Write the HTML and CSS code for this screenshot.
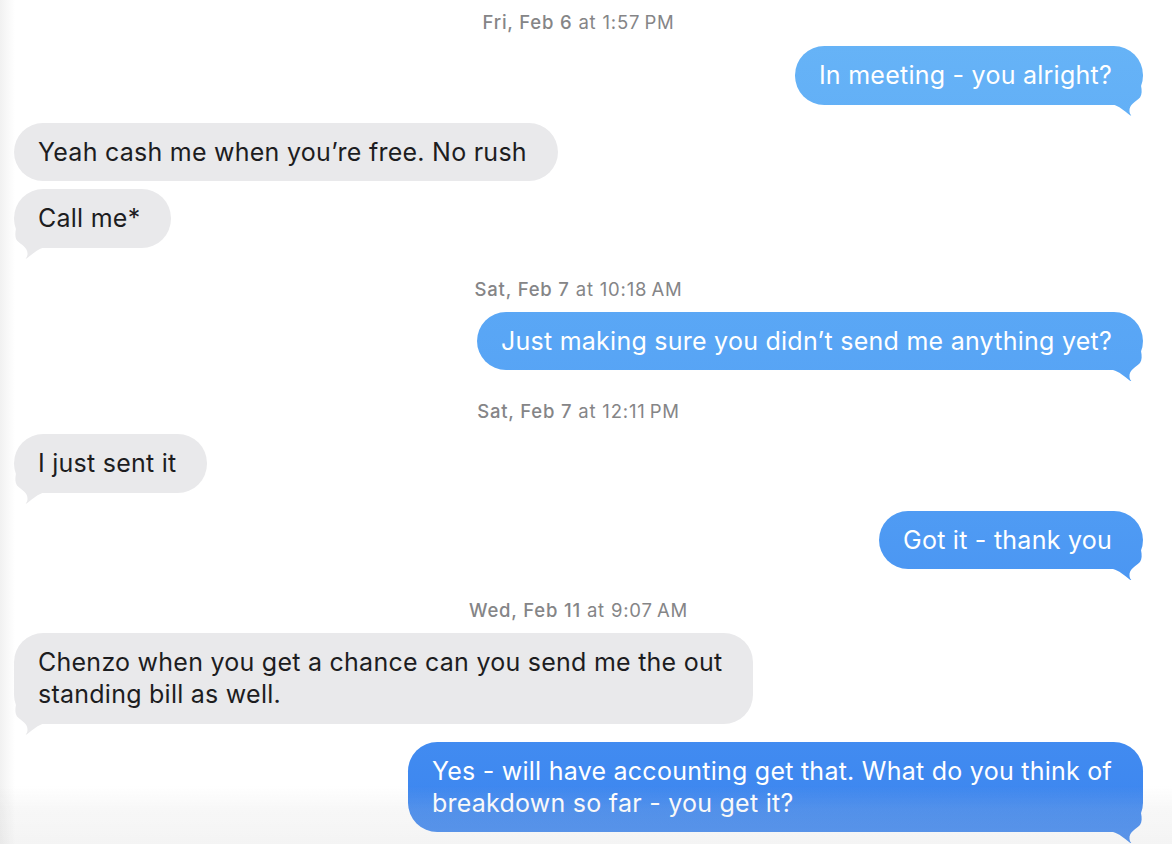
FILE: index.html
```html
<!DOCTYPE html>
<html lang="en">
<head>
<meta charset="utf-8">
<title>Messages</title>
<link rel="stylesheet" href="styles.css">
</head>
<body>
<main class="thread">
  <div class="stamp first"><b>Fri, Feb 6</b> at 1:57&#8239;PM</div>
  <div class="row sent"><div class="bubble blue tail">In meeting - you alright?</div></div>
  <div class="row recv"><div class="bubble gray">Yeah cash me when you’re free. No rush</div></div>
  <div class="row recv cont"><div class="bubble gray tail">Call me*</div></div>

  <div class="stamp"><b>Sat, Feb 7</b> at 10:18&#8239;AM</div>
  <div class="row sent"><div class="bubble blue tail">Just making sure you didn’t send me anything yet?</div></div>

  <div class="stamp"><b>Sat, Feb 7</b> at 12:11&#8239;PM</div>
  <div class="row recv"><div class="bubble gray tail">I just sent it</div></div>
  <div class="row sent"><div class="bubble blue tail">Got it - thank you</div></div>

  <div class="stamp"><b>Wed, Feb 11</b> at 9:07&#8239;AM</div>
  <div class="row recv"><div class="bubble gray tail">Chenzo when you get a chance can you send me the out<br>standing bill as well.</div></div>
  <div class="row sent"><div class="bubble blue tail">Yes - will have accounting get that. What do you think of<br>breakdown so far - you get it?</div></div>
</main>
<div class="bottom-fade"></div>
</body>
</html>
```

FILE: styles.css
```css
html, body {
  margin: 0;
  padding: 0;
}

body {
  width: 1172px;
  height: 844px;
  overflow: hidden;
  font-family: Inter, "Noto Sans", "Liberation Sans", sans-serif;
  background: linear-gradient(to right, #f1f1f1 0, #f8f8f8 7px, #ffffff 15px);
}

.thread {
  display: flex;
  flex-direction: column;
  padding: 12px 29px 0 14px;
}

.stamp {
  text-align: center;
  font-size: 18.5px;
  letter-spacing: 0.8px;
  line-height: 20px;
  height: 20px;
  color: #858587;
  margin-top: 31px;
  margin-bottom: 13px;
}

.stamp b {
  font-weight: 500;
}

.stamp.first {
  margin-top: 0;
  margin-bottom: 14px;
}

.row {
  display: flex;
  margin-top: 18px;
}

.stamp + .row {
  margin-top: 0;
}

.row.cont {
  margin-top: 8px;
}

.row.sent {
  justify-content: flex-end;
}

.row.recv {
  justify-content: flex-start;
}

.bubble {
  position: relative;
  font-size: 25px;
  letter-spacing: 0.25px;
  line-height: 32px;
  padding: 13.25px 31px 13.25px 24px;
  border-radius: 29.25px;
  white-space: nowrap;
}

.bubble.gray {
  background: #e9e9eb;
  color: #1d1d1f;
}

.bubble.blue {
  color: #ffffff;
  background-image: linear-gradient(to bottom, #68b5f7 0px, #56a3f5 400px, #3b84ef 844px);
  background-attachment: fixed;
}

.bubble.tail::after {
  content: "";
  position: absolute;
  bottom: -11px;
  width: 32px;
  height: 30px;
  background: inherit;
  clip-path: path("M0 0 H30 C31 5 31 9 29 12 C24 17 18 19 18.5 26 C18.7 28 19.6 29.2 20.2 29.6 C20.4 29.9 19.6 30 19 29.7 C13 25 8 20.5 2 19 H0 Z");
}

.bubble.blue.tail::after {
  right: 0;
}

.bubble.gray.tail::after {
  left: 0;
  transform: scaleX(-1);
}

.bottom-fade {
  position: fixed;
  left: 0;
  right: 0;
  bottom: 0;
  height: 58px;
  background: linear-gradient(to bottom, rgba(205, 205, 205, 0) 0, rgba(205, 205, 205, 0.15) 40%, rgba(205, 205, 205, 0.22) 100%);
  pointer-events: none;
}
```
